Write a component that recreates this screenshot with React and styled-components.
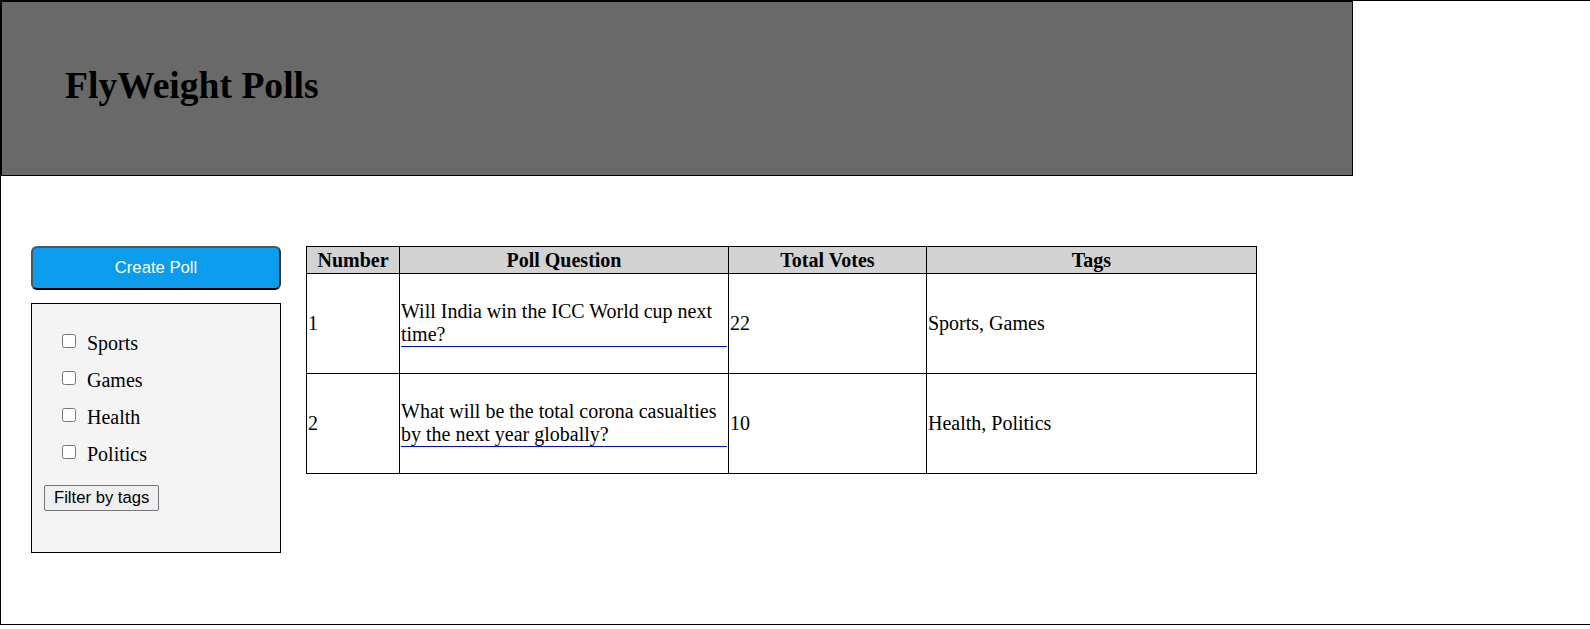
import React from 'react';
import styled, { createGlobalStyle } from 'styled-components';

const GlobalStyle = createGlobalStyle`
  body {
    margin: 0;
    font-family: "Liberation Serif", "Times New Roman", serif;
    font-size: 20px;
    color: #000;
    background: #fff;
  }
`;

// Layout
const Page = styled.div`
  border: 1px solid #000;
  width: 100%;
`;

const Header = styled.header`
  width: 1350px;
  height: 173px;
  background: #696969;
  border: 1px solid #000;
`;

const Title = styled.h1`
  margin: 0;
  padding: 62px 0 0 63px;
  font-size: 37.6px;
  font-weight: bold;
  line-height: normal;
`;

const Main = styled.main`
  display: flex;
  align-items: flex-start;
  gap: 25px;
  padding: 70px 0 71px 30px;
`;

const Sidebar = styled.aside`
  width: 250px;
  display: flex;
  flex-direction: column;
  gap: 13px;
`;

const CreateButton = styled.button`
  height: 44px;
  background: #0b9ced;
  color: #fff;
  font-family: "Liberation Sans", Arial, sans-serif;
  font-size: 16.67px;
  border: 2px solid;
  border-color: #555 #333 #000 #555;
  border-radius: 6px;
  cursor: pointer;
`;

const FilterBox = styled.form`
  background: #f4f4f4;
  border: 1px solid #000;
  padding: 21px 12px 12px;
  box-sizing: border-box;
  height: 250px;
`;

const TagList = styled.div`
  padding-left: 14px;
`;

const TagRow = styled.label`
  display: flex;
  align-items: center;
  height: 37px;

  input {
    width: 14px;
    height: 14px;
    margin: 0 11px 5px 4px;
  }
`;

const FilterButton = styled.button`
  margin-top: 12px;
  font-family: "Liberation Sans", Arial, sans-serif;
  font-size: 16.67px;
  padding: 2px 9px;
  background: #efefef;
  border: 1px solid #767676;
  border-radius: 2px;
  color: #000;
`;

// Table
const PollTable = styled.table`
  width: 950px;
  table-layout: fixed;
  border-collapse: collapse;
`;

const Th = styled.th`
  background: #d3d3d3;
  border: 1px solid #000;
  padding: 1.5px 1px;
  font-weight: bold;
  text-align: center;
`;

const Td = styled.td`
  border: 1px solid #000;
  padding: 1px;
  height: 97px;
  vertical-align: middle;
  text-align: left;
`;

const QuestionLink = styled.a`
  display: block;
  color: #000;
  text-decoration: none;
  border-bottom: 1px solid #00f;
  cursor: pointer;
`;

const tags = ['Sports', 'Games', 'Health', 'Politics'];

const polls = [
  { id: 1, question: 'Will India win the ICC World cup next time?', votes: 22, tags: 'Sports, Games' },
  { id: 2, question: 'What will be the total corona casualties by the next year globally?', votes: 10, tags: 'Health, Politics' },
];

export default function App() {
  return (
    <>
      <GlobalStyle />
      <Page>
        <Header>
          <Title>FlyWeight Polls</Title>
        </Header>

        <Main>
          <Sidebar>
            <CreateButton type='button'>Create Poll</CreateButton>
            <FilterBox onSubmit={(e) => e.preventDefault()}>
              <TagList>
                {tags.map((t) => (
                  <TagRow key={t}>
                    <input type='checkbox' />
                    {t}
                  </TagRow>
                ))}
              </TagList>
              <FilterButton type='submit'>Filter by tags</FilterButton>
            </FilterBox>
          </Sidebar>

          <PollTable>
            <colgroup>
              <col style={{ width: 93 }} />
              <col style={{ width: 329 }} />
              <col style={{ width: 198 }} />
              <col style={{ width: 330 }} />
            </colgroup>
            <thead>
              <tr>
                <Th>Number</Th>
                <Th>Poll Question</Th>
                <Th>Total Votes</Th>
                <Th>Tags</Th>
              </tr>
            </thead>
            <tbody>
              {polls.map((p) => (
                <tr key={p.id}>
                  <Td>{p.id}</Td>
                  <Td><QuestionLink>{p.question}</QuestionLink></Td>
                  <Td>{p.votes}</Td>
                  <Td>{p.tags}</Td>
                </tr>
              ))}
            </tbody>
          </PollTable>
        </Main>
      </Page>
    </>
  );
}
